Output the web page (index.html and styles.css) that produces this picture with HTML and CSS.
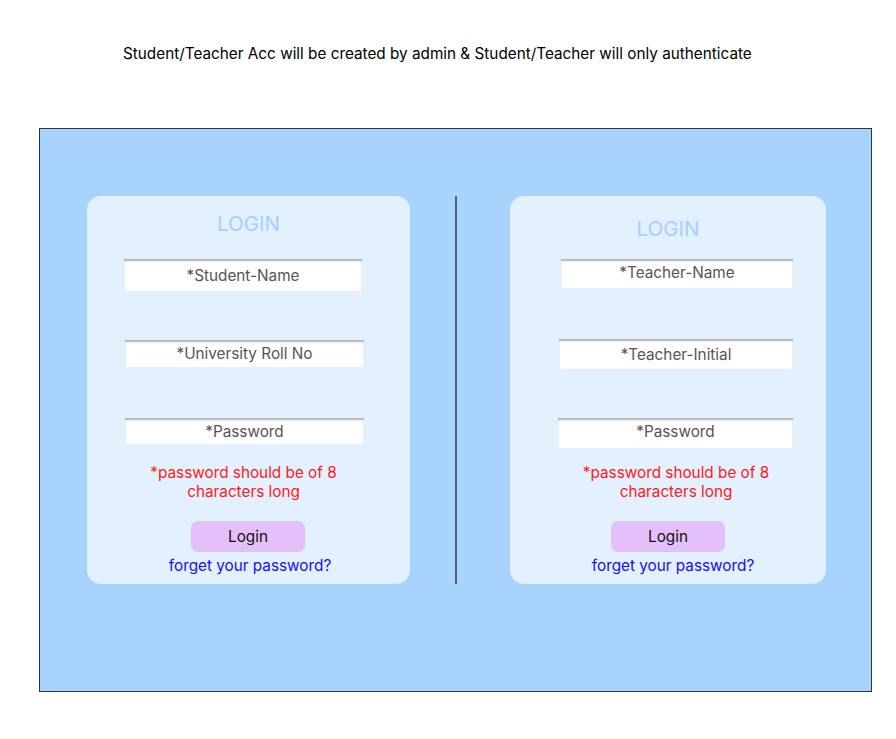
FILE: index.html
```html
<!DOCTYPE html>
<html lang="en">
<head>
<meta charset="utf-8">
<title>Login</title>
<link rel="stylesheet" href="styles.css">
</head>
<body>
<p class="note">Student/Teacher Acc will be created by admin &amp; Student/Teacher will only authenticate</p>
<div class="frame">
  <section class="card card-student">
    <h2 class="title">LOGIN</h2>
    <div class="field f1">*Student-Name</div>
    <div class="field f2">*University Roll No</div>
    <div class="field f3">*Password</div>
    <p class="error">*password should be of 8<br>characters long</p>
    <button class="btn">Login</button>
    <a class="link" href="#">forget your password?</a>
  </section>
  <div class="divider"></div>
  <section class="card card-teacher">
    <h2 class="title">LOGIN</h2>
    <div class="field f1">*Teacher-Name</div>
    <div class="field f2">*Teacher-Initial</div>
    <div class="field f3">*Password</div>
    <p class="error">*password should be of 8<br>characters long</p>
    <button class="btn">Login</button>
    <a class="link" href="#">forget your password?</a>
  </section>
</div>
</body>
</html>
```
FILE: styles.css
```css
* { box-sizing: border-box; }
html, body { margin: 0; padding: 0; background: #fff; }
body {
  font-family: Inter, "Noto Sans", sans-serif;
  width: 896px;
  height: 739px;
  overflow: hidden;
}
.note {
  margin: 0;
  padding: 44px 0 0 123px;
  font-size: 15.3px;
  line-height: 19px;
  color: #000;
}
.frame {
  margin: 65px 0 0 39px;
  width: 833px;
  height: 564px;
  background: #a7d3fc;
  border: 1px solid #2b3440;
  display: flex;
  align-items: flex-start;
  padding: 67px 0 0 47px;
}
.card {
  height: 388px;
  background: #e3f0fd;
  border-radius: 14px;
  display: flex;
  flex-direction: column;
  align-items: flex-start;
}
.card-student { width: 323px; }
.card-teacher { width: 316px; }
.divider {
  width: 2px;
  height: 388px;
  background: #4f6478;
  margin: 0 53px 0 45px;
}
.title {
  margin: 16px 0 0;
  width: 100%;
  text-align: center;
  font-weight: 400;
  font-size: 20.5px;
  line-height: 24px;
  color: #a6d1fb;
}
.card-teacher .title { margin-top: 21px; }
.field {
  background: #fff;
  color: #555;
  font-size: 15.3px;
  text-align: center;
  display: flex;
  align-items: center;
  justify-content: center;
  box-shadow: inset 0 3px 2px -1px rgba(0,0,0,0.3), inset 1px 0 1px rgba(0,0,0,0.06), inset -1px 0 1px rgba(0,0,0,0.06);
}
.card-student .f1 { margin: 23px 0 0 37px; width: 238px; height: 32px; }
.card-student .f2 { margin: 49px 0 0 38px; width: 239px; height: 27px; }
.card-student .f3 { margin: 51px 0 0 38px; width: 239px; height: 26px; }
.card-teacher .f1 { margin: 18px 0 0 51px; width: 232px; height: 29px; padding-bottom: 3px; }
.card-teacher .f2 { margin: 51px 0 0 49px; width: 234px; height: 30px; }
.card-teacher .f3 { margin: 49px 0 0 48px; width: 235px; height: 30px; padding-bottom: 4px; }
.error {
  margin: 0;
  text-align: center;
  color: #ff1a1a;
  font-size: 15.3px;
  line-height: 19px;
}
.card-student .error { margin: 19px 0 0 1px; width: 311px; }
.card-teacher .error { margin: 15px 0 0 16px; width: 300px; }
.btn {
  margin: 20px 0 0 104px;
  width: 114px;
  height: 31px;
  border: none;
  border-radius: 7px;
  background: #e4c0fb;
  color: #111;
  font-family: inherit;
  font-size: 15.3px;
  padding: 0;
}
.card-teacher .btn { margin-left: 101px; }
.link {
  margin: 4px 0 0;
  width: 100%;
  text-align: center;
  color: #1a0df5;
  text-decoration: none;
  font-size: 15.3px;
  line-height: 19px;
}
.card-student .link { padding-left: 3px; }
.card-teacher .link { padding-left: 10px; }
```
